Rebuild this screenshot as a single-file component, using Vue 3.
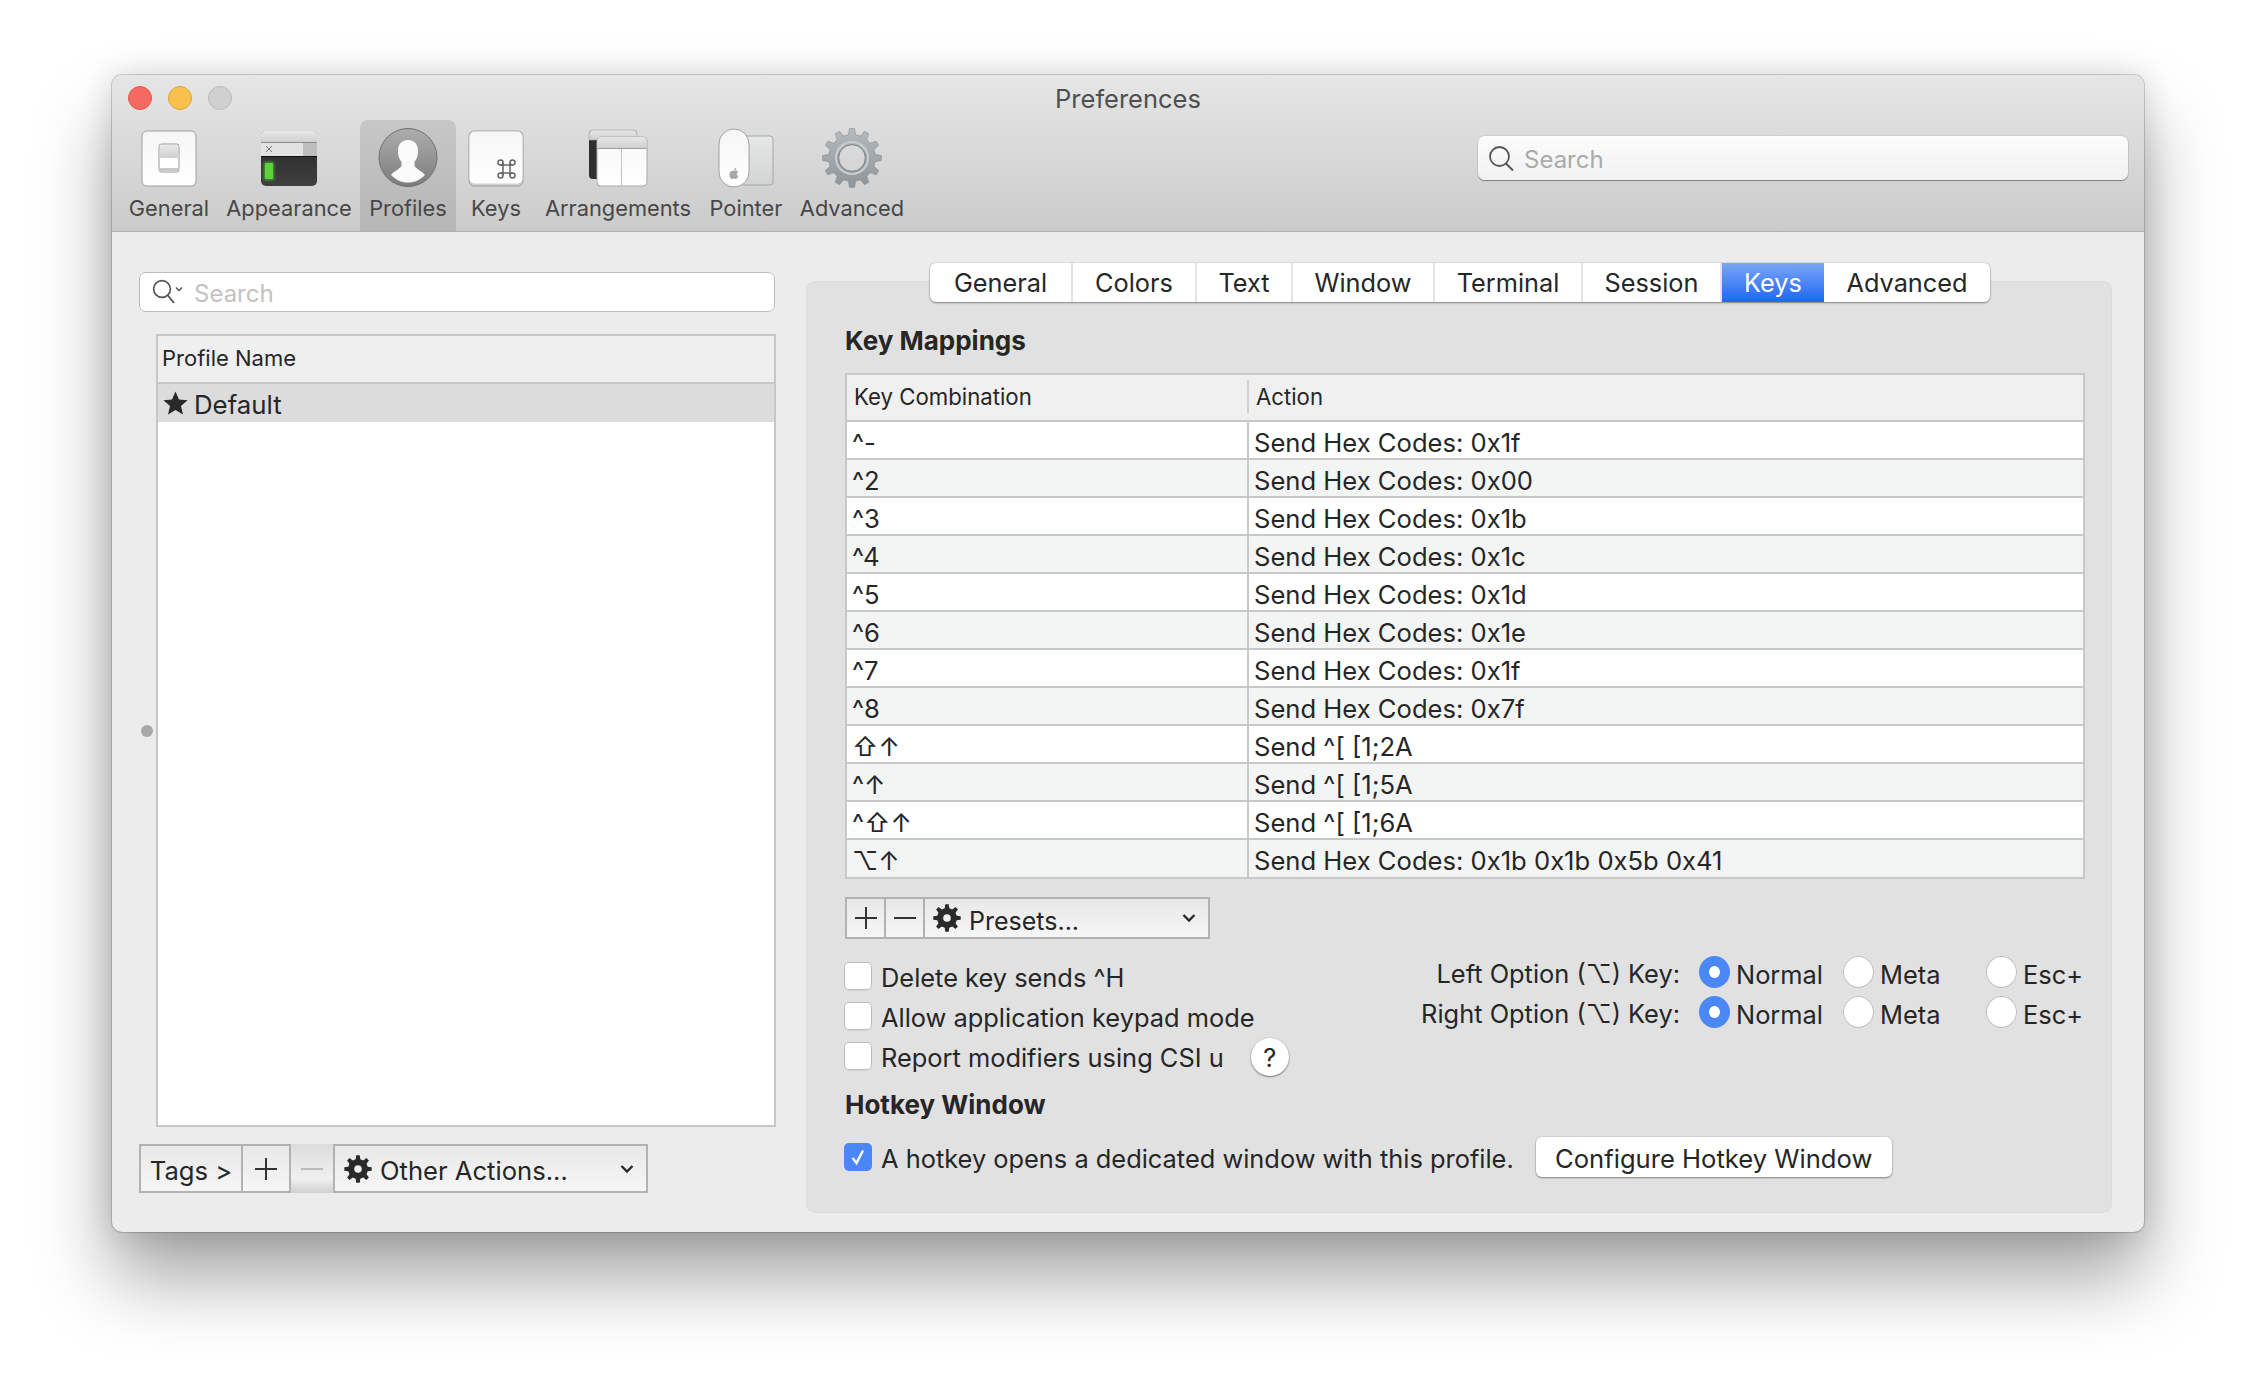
<template>
  <div class="page">
    <div class="window">
      <div class="titlebar">
        <div class="title-row">
          <div class="lights">
            <span class="light red"></span>
            <span class="light yellow"></span>
            <span class="light grey"></span>
          </div>
          <div class="title">Preferences</div>
          <div></div>
        </div>
        <div class="toolbar-row">
          <div class="toolbar">
            <div v-for="tool in tools" :key="tool.name" class="tool" :class="{ active: tool.name === 'Profiles' }">
              <svg class="tool-icon" width="70" height="60" viewBox="0 0 70 60">
                <defs>
                  <linearGradient id="keyFill" x1="0" y1="0" x2="0" y2="1">
                    <stop offset="0" stop-color="#f6f6f8" />
                    <stop offset="1" stop-color="#ffffff" />
                  </linearGradient>
                  <linearGradient id="barFill" x1="0" y1="0" x2="0" y2="1">
                    <stop offset="0" stop-color="#e8e8e8" />
                    <stop offset="1" stop-color="#cfcfcf" />
                  </linearGradient>
                  <linearGradient id="darkFill" x1="0" y1="0" x2="0" y2="1">
                    <stop offset="0" stop-color="#262626" />
                    <stop offset="1" stop-color="#3f3f3f" />
                  </linearGradient>
                  <linearGradient id="faceFill" x1="0" y1="0" x2="0" y2="1">
                    <stop offset="0" stop-color="#adadad" />
                    <stop offset="1" stop-color="#7c7c7c" />
                  </linearGradient>
                  <linearGradient id="gearFill" x1="0" y1="0" x2="0" y2="1">
                    <stop offset="0" stop-color="#b4babd" />
                    <stop offset="1" stop-color="#8f9599" />
                  </linearGradient>
                  <linearGradient id="padFill" x1="0" y1="0" x2="0" y2="1">
                    <stop offset="0" stop-color="#e6e8e8" />
                    <stop offset="1" stop-color="#d2d4d4" />
                  </linearGradient>
                  <filter id="glow" x="-80%" y="-40%" width="260%" height="180%">
                    <feGaussianBlur stdDeviation="1.4" />
                  </filter>
                </defs>

                <template v-if="tool.name === 'General'">
                  <rect x="8" y="3" width="54" height="55" rx="5" fill="url(#keyFill)" stroke="#a0a0a0" />
                  <rect x="25" y="16" width="20" height="28" rx="2.5" fill="#fff" stroke="#9a9a9a" />
                  <rect x="26" y="17" width="18" height="13" rx="1.5" fill="url(#barFill)" />
                  <rect x="26" y="40" width="18" height="3.4" fill="#c8c8c8" />
                </template>

                <template v-else-if="tool.name === 'Appearance'">
                  <rect x="7" y="3" width="56" height="55" rx="5" fill="url(#darkFill)" />
                  <path d="M7 28 V8 a5 5 0 0 1 5 -5 H58 a5 5 0 0 1 5 5 V28 Z" fill="#e2e2e2" />
                  <path d="M7 14 V8 a5 5 0 0 1 5 -5 H58 a5 5 0 0 1 5 5 V14 Z" fill="url(#barFill)" />
                  <rect x="7" y="14" width="56" height="1" fill="#8c8c8c" />
                  <rect x="49" y="15" width="14" height="13" fill="#bdbdbd" />
                  <rect x="7" y="28" width="56" height="1" fill="#111" />
                  <path d="M12 18 L18 24 M18 18 L12 24" stroke="#777" stroke-width="1" />
                  <rect x="10" y="34" width="10" height="18" fill="#4fd02c" opacity=".7" filter="url(#glow)" />
                  <rect x="11" y="35" width="8" height="16" rx="1" fill="#5dd23a" />
                </template>

                <template v-else-if="tool.name === 'Profiles'">
                  <circle cx="35" cy="29.5" r="29" fill="url(#faceFill)" stroke="#6f6f6f" />
                  <path
                    d="M35 12 C42 12 45.5 17 45 24 C44.8 29 43 32 41.5 34 L41.5 38 C43 41 49 43 52 47 C47 52 41.5 54.5 35 54.5 C28.5 54.5 23 52 18 47 C21 43 27 41 28.5 38 L28.5 34 C27 32 25.2 29 25 24 C24.5 17 28 12 35 12 Z"
                    fill="#fbfbfb"
                  />
                </template>

                <template v-else-if="tool.name === 'Keys'">
                  <rect x="8" y="3" width="54" height="55" rx="5" fill="#cfcfcf" stroke="#a0a0a0" />
                  <rect x="8.5" y="3.5" width="53" height="52" rx="5" fill="url(#keyFill)" />
                  <g fill="none" stroke="#666" stroke-width="1.5">
                    <path d="M42 34.5 V47.5 M49 34.5 V47.5 M39.5 37 H51.5 M39.5 45 H51.5" />
                    <circle cx="39.5" cy="34.5" r="2.5" />
                    <circle cx="51.5" cy="34.5" r="2.5" />
                    <circle cx="39.5" cy="47.5" r="2.5" />
                    <circle cx="51.5" cy="47.5" r="2.5" />
                  </g>
                </template>

                <template v-else-if="tool.name === 'Arrangements'">
                  <rect x="6" y="2" width="48" height="49" rx="4" fill="#2f2f2f" />
                  <path d="M6 12 V6 a4 4 0 0 1 4 -4 H50 a4 4 0 0 1 4 4 V12 Z" fill="url(#barFill)" stroke="#a0a0a0" stroke-width=".6" />
                  <rect x="14" y="9" width="50" height="49" rx="4" fill="url(#keyFill)" stroke="#a8a8a8" />
                  <path d="M14.5 20 V13 a4 4 0 0 1 4 -4 H60 a4 4 0 0 1 3.5 4 V20 Z" fill="url(#barFill)" />
                  <rect x="14.5" y="20" width="49" height="1" fill="#a0a0a0" />
                  <rect x="38" y="21" width="1" height="37" fill="#c4c4c4" />
                </template>

                <template v-else-if="tool.name === 'Pointer'">
                  <rect x="29" y="8" width="33" height="49" rx="3" fill="url(#padFill)" stroke="#a6a6a6" />
                  <rect x="8" y="1" width="30" height="58" rx="15" fill="url(#keyFill)" stroke="#a0a0a0" />
                  <path d="M23 43 C25 42 27 43 27 44 C25.5 45 25.5 47.5 27.2 48.2 C26.5 50 25.5 51 24.5 51 C23.8 51 23.4 50.6 22.8 50.6 C22.2 50.6 21.8 51 21 51 C19.8 51 18.4 48.6 18.4 46.4 C18.4 44 20 42.8 21.4 42.8 C22 42.8 22.6 43 23 43 Z M23 42.4 C23 41 24 40 25.2 39.8 C25.3 41.2 24.2 42.4 23 42.4 Z" fill="#a8a8a8" />
                </template>

                <template v-else>
                  <path :d="bigGear" fill="url(#gearFill)" fill-rule="evenodd" stroke="#8a8f92" stroke-width=".6" />
                  <circle cx="35" cy="30" r="16" fill="none" stroke="#c9cdcf" stroke-width="2" />
                  <circle cx="35" cy="30" r="13.4" fill="none" stroke="#777c80" stroke-width=".8" />
                </template>
              </svg>
              <span class="tool-label">{{ tool.name }}</span>
            </div>
          </div>
          <div class="top-search">
            <svg width="27" height="27" viewBox="0 0 27 27">
              <circle cx="11.5" cy="11.5" r="9.5" fill="none" stroke="#555" stroke-width="1.8" />
              <path d="M18 18.5 L25 25.5" stroke="#555" stroke-width="2" />
            </svg>
            <span class="nudge">Search</span>
          </div>
        </div>
      </div>

      <div class="body">
        <div class="left-col">
          <div class="profile-search">
            <svg width="38" height="26" viewBox="0 0 38 26">
              <circle cx="10" cy="10" r="8.4" fill="none" stroke="#555" stroke-width="1.7" />
              <path d="M15.5 16 L22 24" stroke="#555" stroke-width="1.9" />
              <path d="M24 8.5 L27 11.5 L30 8.5" fill="none" stroke="#555" stroke-width="1.5" />
            </svg>
            <span class="nudge">Search</span>
          </div>
          <div class="list-wrap">
            <span class="split-dot"></span>
            <div class="profile-list">
              <div class="list-head">Profile Name</div>
              <div class="list-row">
                <svg width="25" height="24" viewBox="0 0 25 24">
                  <path d="M12.5 0.5 L16 8.6 L24.6 9.3 L18 15 L20 23.6 L12.5 19 L5 23.6 L7 15 L0.4 9.3 L9 8.6 Z" fill="#2a2a2a" />
                </svg>
                <span class="nudge">Default</span>
              </div>
            </div>
          </div>
          <div class="button-bar left-bar">
            <div class="seg tags-seg"><span class="nudge">Tags &gt;</span></div>
            <div class="seg icon-seg">
              <svg width="24" height="24" viewBox="0 0 24 24"><path d="M12 1 V23 M1 12 H23" stroke="#333" stroke-width="2" /></svg>
            </div>
            <div class="seg icon-seg disabled">
              <svg width="24" height="24" viewBox="0 0 24 24"><path d="M1 12 H23" stroke="#bbb" stroke-width="2" /></svg>
            </div>
            <div class="seg menu-seg">
              <svg width="28" height="28" viewBox="0 0 28 28"><path :d="smallGear" fill="#2a2a2a" fill-rule="evenodd" /></svg>
              <span class="nudge">Other Actions...</span>
              <svg class="chevron" width="14" height="10" viewBox="0 0 14 10"><path d="M1.5 2 L7 7.5 L12.5 2" fill="none" stroke="#2a2a2a" stroke-width="2.4" /></svg>
            </div>
          </div>
        </div>

        <div class="panel">
          <div class="tabs">
            <div v-for="tab in tabs" :key="tab" class="tab" :class="{ selected: tab === 'Keys' }">{{ tab }}</div>
          </div>

          <h2 class="section-title first">Key Mappings</h2>

          <div class="key-table">
            <div class="key-head">
              <div class="key-head-cell">Key Combination</div>
              <div class="key-head-cell action">Action</div>
            </div>
            <div v-for="row in mappings" :key="row[0]" class="key-row">
              <div class="key-cell">{{ row[0] }}</div>
              <div class="action-cell">{{ row[1] }}</div>
            </div>
          </div>

          <div class="button-bar preset-bar">
            <div class="seg small-seg">
              <svg width="24" height="24" viewBox="0 0 24 24"><path d="M12 1 V23 M1 12 H23" stroke="#333" stroke-width="2" /></svg>
            </div>
            <div class="seg small-seg">
              <svg width="24" height="24" viewBox="0 0 24 24"><path d="M1 12 H23" stroke="#333" stroke-width="2" /></svg>
            </div>
            <div class="seg menu-seg preset-seg">
              <svg width="28" height="28" viewBox="0 0 28 28"><path :d="smallGear" fill="#2a2a2a" fill-rule="evenodd" /></svg>
              <span class="nudge big">Presets...</span>
              <svg class="chevron" width="14" height="10" viewBox="0 0 14 10"><path d="M1.5 2 L7 7.5 L12.5 2" fill="none" stroke="#2a2a2a" stroke-width="2.4" /></svg>
            </div>
          </div>

          <div class="options">
            <div class="checks">
              <label class="check-row"><span class="box"></span><span class="check-text">Delete key sends ^H</span></label>
              <label class="check-row"><span class="box"></span><span class="check-text">Allow application keypad mode</span></label>
              <label class="check-row">
                <span class="box"></span><span class="check-text">Report modifiers using CSI u</span>
                <span class="help">?</span>
              </label>
            </div>
            <div class="option-grid">
              <template v-for="side in ['Left', 'Right']" :key="side">
                <div class="option-label">{{ side }} Option (⌥) Key:</div>
                <div class="radio-item"><span class="radio on"></span><span class="nudge">Normal</span></div>
                <div class="radio-item"><span class="radio"></span><span class="nudge">Meta</span></div>
                <div class="radio-item"><span class="radio"></span><span class="nudge">Esc+</span></div>
              </template>
            </div>
          </div>

          <h2 class="section-title second">Hotkey Window</h2>

          <div class="hotkey-row">
            <label class="check-row">
              <span class="box checked">
                <svg width="18" height="20" viewBox="0 0 18 20"><path d="M3.5 11 L7.5 16 L14 3.5" fill="none" stroke="#fff" stroke-width="2.4" /></svg>
              </span>
              <span class="check-text">A hotkey opens a dedicated window with this profile.</span>
            </label>
            <div class="config-btn"><span class="nudge">Configure Hotkey Window</span></div>
          </div>
        </div>
      </div>
    </div>
  </div>
</template>

<script setup>
const tools = [
  { name: 'General' },
  { name: 'Appearance' },
  { name: 'Profiles' },
  { name: 'Keys' },
  { name: 'Arrangements' },
  { name: 'Pointer' },
  { name: 'Advanced' }
]

const tabs = ['General', 'Colors', 'Text', 'Window', 'Terminal', 'Session', 'Keys', 'Advanced']

const mappings = [
  ['^-', 'Send Hex Codes: 0x1f'],
  ['^2', 'Send Hex Codes: 0x00'],
  ['^3', 'Send Hex Codes: 0x1b'],
  ['^4', 'Send Hex Codes: 0x1c'],
  ['^5', 'Send Hex Codes: 0x1d'],
  ['^6', 'Send Hex Codes: 0x1e'],
  ['^7', 'Send Hex Codes: 0x1f'],
  ['^8', 'Send Hex Codes: 0x7f'],
  ['⇧↑', 'Send ^[ [1;2A'],
  ['^↑', 'Send ^[ [1;5A'],
  ['^⇧↑', 'Send ^[ [1;6A'],
  ['⌥↑', 'Send Hex Codes: 0x1b 0x1b 0x5b 0x41']
]

// cog outline with a round hole, teeth are simple trapezoids
function gearPath(cx, cy, outer, root, hole, teeth) {
  const step = (Math.PI * 2) / teeth
  const pts = []
  for (let i = 0; i < teeth; i++) {
    const a = i * step - Math.PI / 2
    const spots = [
      [root, a - step * 0.3],
      [outer, a - step * 0.16],
      [outer, a + step * 0.16],
      [root, a + step * 0.3]
    ]
    for (const [r, t] of spots) {
      pts.push(`${(cx + r * Math.cos(t)).toFixed(2)} ${(cy + r * Math.sin(t)).toFixed(2)}`)
    }
  }
  const ring = `M${cx - hole} ${cy} a${hole} ${hole} 0 1 0 ${hole * 2} 0 a${hole} ${hole} 0 1 0 ${-hole * 2} 0 Z`
  return `M${pts.join(' L')} Z ${ring}`
}

const bigGear = gearPath(35, 30, 29.5, 23.5, 13.4, 12)
const smallGear = gearPath(14, 14, 13.8, 10, 3.8, 8)
</script>

<style scoped>
.page {
  width: 2256px;
  height: 1380px;
  padding: 75px 0 0 112px;
  box-sizing: border-box;
  overflow: hidden;
  background: #fff;
  font-family: Inter, "Liberation Sans", "DejaVu Sans", sans-serif;
  color: #262626;
}
.window {
  width: 2032px;
  height: 1157px;
  border-radius: 10px;
  background: #ececec;
  overflow: hidden;
  box-shadow: 0 46px 76px rgba(0, 0, 0, 0.36), 0 0 30px rgba(0, 0, 0, 0.14), 0 0 0 1px rgba(0, 0, 0, 0.16);
}
.titlebar {
  height: 157px;
  box-sizing: border-box;
  background: linear-gradient(#e6e6e6, #cbcbcb);
  border-bottom: 1px solid #b0b0b0;
}
.title-row {
  height: 45px;
  display: grid;
  grid-template-columns: 1fr auto 1fr;
  align-items: center;
}
.lights {
  display: flex;
  gap: 16px;
  padding-left: 16px;
}
.light {
  width: 24px;
  height: 24px;
  border-radius: 50%;
  box-sizing: border-box;
}
.red {
  background: #f46a60;
  border: 1px solid #e2574e;
}
.yellow {
  background: #f8c04d;
  border: 1px solid #e0a63a;
}
.grey {
  background: #d0d0d0;
  border: 1px solid #bdbdbd;
}
.title {
  font-size: 25.5px;
  padding-top: 2px;
  color: #4f4f4f;
}
.toolbar-row {
  display: flex;
  height: 111px;
}
.toolbar {
  display: grid;
  grid-template-columns: 98px 142px 96px 80px 164px 92px 120px;
  margin-left: 8px;
}
.tool {
  display: flex;
  flex-direction: column;
  align-items: center;
  padding-top: 8px;
  border-radius: 8px 8px 0 0;
}
.tool.active {
  background: rgba(0, 0, 0, 0.1);
}
.tool-label {
  font-size: 21.8px;
  line-height: 26px;
  margin-top: 7px;
  color: #474747;
  white-space: nowrap;
}
.nudge {
  padding-top: 3px;
}
.nudge.big {
  padding-top: 5px;
}
.top-search {
  margin: 16px 16px 0 auto;
  width: 650px;
  height: 44px;
  box-sizing: border-box;
  padding-left: 10px;
  display: flex;
  align-items: center;
  gap: 9px;
  border-radius: 7px;
  background: linear-gradient(#fcfcfc, #f1f1f1);
  box-shadow: 0 1px 1px rgba(0, 0, 0, 0.4), 0 0 0 1px rgba(0, 0, 0, 0.05);
  color: #aaa;
  font-size: 24px;
}
.body {
  display: flex;
  padding: 40px 0 0 27px;
}
.left-col {
  width: 637px;
}
.profile-search {
  width: 636px;
  height: 40px;
  box-sizing: border-box;
  border: 1px solid #bbb;
  border-radius: 7px;
  background: #fff;
  display: flex;
  align-items: center;
  padding-left: 12px;
  gap: 4px;
  color: #c2c2c2;
  font-size: 24px;
}
.list-wrap {
  display: flex;
  align-items: center;
  margin-top: 22px;
}
.split-dot {
  width: 12px;
  height: 12px;
  margin: 0 3px 0 2px;
  border-radius: 50%;
  background: #a8a8a8;
}
.profile-list {
  width: 620px;
  height: 793px;
  box-sizing: border-box;
  border: 2px solid #c6c6c6;
  background: #fff;
}
.list-head {
  height: 48px;
  box-sizing: border-box;
  padding: 0 0 2px 4px;
  border-bottom: 2px solid #c8c8c8;
  background: #efefef;
  display: flex;
  align-items: center;
  font-size: 22px;
}
.list-row {
  height: 38px;
  background: #dcdcdc;
  display: flex;
  align-items: center;
  padding-left: 5px;
  gap: 6px;
  font-size: 25.8px;
}
.button-bar {
  display: flex;
  box-sizing: border-box;
  border: 2px solid #b2b2b2;
  background: linear-gradient(#e8e8e8, #f6f6f6);
}
.left-bar {
  width: 509px;
  height: 49px;
  margin-top: 17px;
  font-size: 25.6px;
}
.seg {
  display: flex;
  align-items: center;
  justify-content: center;
  box-sizing: border-box;
}
.tags-seg {
  width: 102px;
  border-right: 2px solid #b2b2b2;
}
.icon-seg {
  width: 46px;
}
.icon-seg.disabled {
  border-left: 2px solid #b2b2b2;
  border-right: 2px solid #b2b2b2;
  margin-top: -2px;
  margin-bottom: -2px;
  background: linear-gradient(#dcdcdc, #f0f0f0 70%, #d0d0d0);
}
.menu-seg {
  flex: 1;
  justify-content: flex-start;
  padding-left: 9px;
  gap: 8px;
}
.chevron {
  margin-left: auto;
  margin-right: 12px;
}
.panel {
  width: 1304px;
  height: 930px;
  box-sizing: border-box;
  margin: 10px 0 0 31px;
  padding: 0 26px 0 38px;
  border-radius: 8px;
  background: #e1e1e1;
  box-shadow: 0 0 0 1px #dcdcdc;
}
.tabs {
  display: grid;
  grid-template-columns: 143px 124px 96px 142px 148px 139px 102px 166px;
  width: 1060px;
  height: 39px;
  margin: -19px 0 0 85px;
  border-radius: 6px;
  background: #fff;
  box-shadow: 0 1px 2px rgba(0, 0, 0, 0.4), 0 0 0 1px rgba(0, 0, 0, 0.06);
  font-size: 25.3px;
  overflow: hidden;
}
.tab {
  display: flex;
  align-items: center;
  justify-content: center;
  border-right: 2px solid #e4e4e4;
}
.tab:last-child {
  border-right: none;
}
.tab.selected {
  background: linear-gradient(#7ba6f6, #1f66f5);
  color: #fff;
  border-right: none;
}
.section-title {
  margin: 0;
  font-size: 26px;
  line-height: 30px;
  font-weight: 700;
}
.section-title.first {
  margin-top: 24px;
}
.section-title.second {
  margin-top: 20px;
}
.key-table {
  margin-top: 17px;
  width: 1240px;
  box-sizing: border-box;
  border: 2px solid #c8c8c8;
  background: #fff;
}
.key-head {
  height: 47px;
  box-sizing: border-box;
  display: grid;
  grid-template-columns: 400px 1fr;
  align-items: center;
  padding-bottom: 2px;
  border-bottom: 2px solid #c8c8c8;
  background: #f0f0f0;
  font-size: 22.2px;
}
.key-head-cell {
  padding-left: 7px;
}
.key-head-cell.action {
  height: 33px;
  line-height: 33px;
  border-left: 2px solid #d2d2d2;
}
.key-row {
  height: 38px;
  box-sizing: border-box;
  display: grid;
  grid-template-columns: 400px 1fr;
  border-bottom: 2px solid #c8c8c8;
  font-size: 25.6px;
}
.key-row:nth-child(odd) {
  background: #f3f4f4;
}
.key-row:last-child {
  height: 37px;
  border-bottom: none;
}
.key-cell,
.action-cell {
  display: flex;
  align-items: center;
  padding-top: 4px;
}
.key-cell {
  padding-left: 5px;
}
.action-cell {
  padding-left: 5px;
  border-left: 2px solid #c8c8c8;
}
.preset-bar {
  width: 365px;
  height: 42px;
  margin-top: 18px;
  font-size: 25px;
}
.small-seg {
  width: 39px;
  border-right: 2px solid #b2b2b2;
}
.preset-seg {
  padding-left: 8px;
}
.options {
  display: flex;
  margin-top: 23px;
  font-size: 25.4px;
}
.checks {
  display: flex;
  flex-direction: column;
  gap: 12px;
  margin-left: -1px;
}
.check-row {
  display: flex;
  align-items: center;
  height: 28px;
  gap: 9px;
  white-space: nowrap;
  font-size: 25.4px;
}
.check-text {
  padding-top: 3px;
}
.box {
  width: 28px;
  height: 28px;
  box-sizing: border-box;
  border-radius: 5px;
  background: #fff;
  box-shadow: inset 0 0 0 1px #bcbcbc, 0 1px 0 rgba(0, 0, 0, 0.05);
  display: flex;
  align-items: center;
  justify-content: center;
  flex: none;
}
.box.checked {
  background: #4a86f5;
  box-shadow: none;
}
.help {
  width: 38px;
  height: 38px;
  margin: 2px 0 0 18px;
  border-radius: 50%;
  background: #fff;
  box-shadow: 0 1px 2px rgba(0, 0, 0, 0.45), 0 0 0 1px rgba(0, 0, 0, 0.05);
  display: flex;
  align-items: center;
  justify-content: center;
}
.option-grid {
  margin: -6px 0 0 auto;
  display: grid;
  grid-template-columns: 319px 144px 143px 99px;
  grid-auto-rows: 32px;
  row-gap: 8px;
}
.option-label {
  text-align: right;
  padding-right: 19px;
  line-height: 35px;
  white-space: nowrap;
}
.radio-item {
  display: flex;
  align-items: center;
  gap: 6px;
}
.radio-item .nudge {
  padding-top: 4px;
}
.radio {
  width: 31px;
  height: 32px;
  flex: none;
  box-sizing: border-box;
  border-radius: 50%;
  background: #fff;
  box-shadow: inset 0 0 0 1px #bdbdbd;
  position: relative;
}
.radio.on {
  background: #4c88f5;
  box-shadow: none;
}
.radio.on::after {
  content: "";
  position: absolute;
  left: 10px;
  top: 10px;
  width: 11px;
  height: 12px;
  border-radius: 50%;
  background: #fff;
}
.hotkey-row {
  display: flex;
  align-items: center;
  margin: 17px 0 0 -1px;
}
.config-btn {
  margin-left: 22px;
  width: 356px;
  height: 40px;
  box-sizing: border-box;
  border-radius: 6px;
  background: #fff;
  box-shadow: 0 1px 2px rgba(0, 0, 0, 0.4), 0 0 0 1px rgba(0, 0, 0, 0.05);
  display: flex;
  align-items: center;
  justify-content: center;
  font-size: 25.6px;
}
</style>

<style>
html,
body {
  margin: 0;
  background: #fff;
}
</style>
